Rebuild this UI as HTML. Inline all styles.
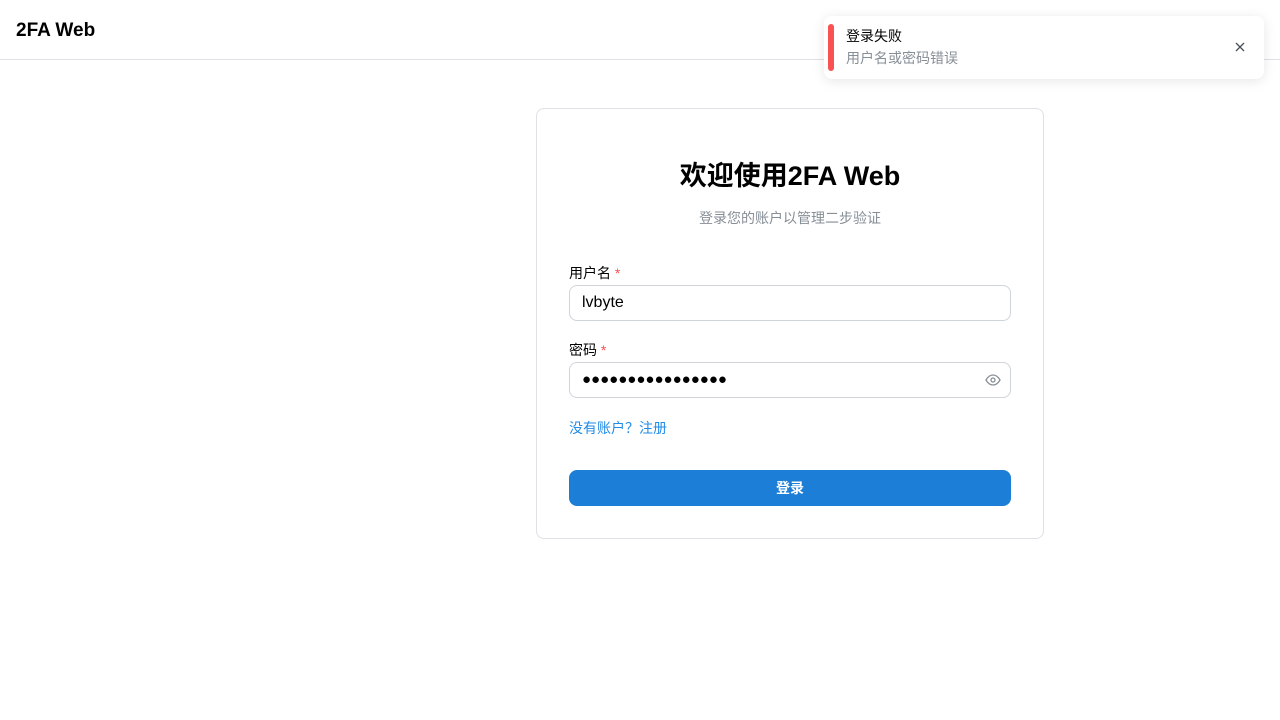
<!DOCTYPE html>
<html><head><meta charset="utf-8"><style>
*{box-sizing:border-box;margin:0;padding:0}
body{width:1280px;height:720px;background:#fff;font-family:"Liberation Sans","Noto Sans CJK SC",sans-serif;position:relative;overflow:hidden;color:#000}
.hdr{height:60px;border-bottom:1px solid #dee2e6;padding-left:16px;font-weight:bold;font-size:19px;line-height:61px}
.card{position:absolute;left:536px;top:108px;width:508px;height:431px;border:1px solid #dee2e6;border-radius:8px;padding:0 32px}
h1{text-align:center;font-size:27px;font-weight:bold;margin-top:49px;line-height:36px}
.sub{text-align:center;font-size:14px;color:#868e96;margin-top:14px;line-height:20px}
label{display:block;font-size:14px;line-height:20px}
label span{color:#fa5252}
.inp{height:36px;border:1px solid #ced4da;border-radius:8px;margin-top:2px;padding-left:12px;font-size:16px;line-height:34px;position:relative}
.link{color:#228be6;font-size:14px;margin-top:20px;line-height:20px}
.btn{height:36px;background:#1c7ed6;border-radius:8px;color:#fff;font-weight:bold;text-align:center;font-size:14px;line-height:36px;margin-top:32px}
.toast{position:absolute;left:824px;top:16px;width:440px;height:63px;background:#fff;border-radius:8px;box-shadow:0 2px 12px rgba(0,0,0,.1)}
.bar{position:absolute;left:4px;top:8px;width:6px;height:47px;background:#fa5252;border-radius:3px}
</style></head><body>
<div class="hdr">2FA Web</div>
<div class="card">
<h1>欢迎使用2FA Web</h1>
<div class="sub">登录您的账户以管理二步验证</div>
<label style="margin-top:35px">用户名 <span>*</span></label>
<div class="inp">lvbyte</div>
<label style="margin-top:19px">密码 <span>*</span></label>
<div class="inp" style="font-size:15px">●●●●●●●●●●●●●●●●
<svg style="position:absolute;right:9px;top:11px" width="16" height="12" viewBox="0 0 16 12" fill="none" stroke="#868e96" stroke-width="1.3"><path d="M1 6C3 2.5 5.5 1 8 1s5 1.5 7 5c-2 3.5-4.5 5-7 5S3 9.5 1 6z"/><circle cx="8" cy="6" r="2"/></svg></div>
<div class="link">没有账户？注册</div>
<div class="btn">登录</div>
</div>
<div class="toast"><div class="bar"></div>
<div style="position:absolute;left:22px;top:10px;font-size:14px;line-height:20px">登录失败</div>
<div style="position:absolute;left:22px;top:32px;font-size:14px;line-height:20px;color:#868e96">用户名或密码错误</div>
<svg style="position:absolute;left:411px;top:26px" width="10" height="10" viewBox="0 0 10 10" stroke="#495057" stroke-width="1.3"><path d="M1 1l8 8M9 1l-8 8"/></svg>
</div>
</body></html>
